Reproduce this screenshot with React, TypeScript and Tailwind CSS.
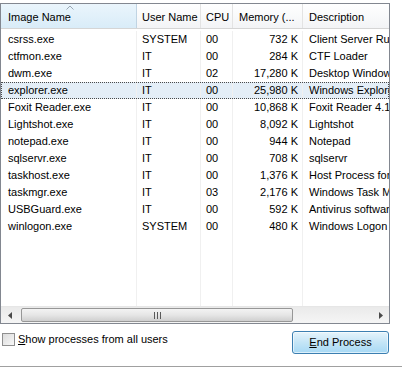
import React from 'react';

type Proc = { name: string; user: string; cpu: string; mem: string; desc: string };

const procs: Proc[] = [
    { name: 'csrss.exe', user: 'SYSTEM', cpu: '00', mem: '732 K', desc: 'Client Server Runtime Process' },
    { name: 'ctfmon.exe', user: 'IT', cpu: '00', mem: '284 K', desc: 'CTF Loader' },
    { name: 'dwm.exe', user: 'IT', cpu: '02', mem: '17,280 K', desc: 'Desktop Window Manager' },
    { name: 'explorer.exe', user: 'IT', cpu: '00', mem: '25,980 K', desc: 'Windows Explorer' },
    { name: 'Foxit Reader.exe', user: 'IT', cpu: '00', mem: '10,868 K', desc: 'Foxit Reader 4.1' },
    { name: 'Lightshot.exe', user: 'IT', cpu: '00', mem: '8,092 K', desc: 'Lightshot' },
    { name: 'notepad.exe', user: 'IT', cpu: '00', mem: '944 K', desc: 'Notepad' },
    { name: 'sqlservr.exe', user: 'IT', cpu: '00', mem: '708 K', desc: 'sqlservr' },
    { name: 'taskhost.exe', user: 'IT', cpu: '00', mem: '1,376 K', desc: 'Host Process for Windows Tasks' },
    { name: 'taskmgr.exe', user: 'IT', cpu: '03', mem: '2,176 K', desc: 'Windows Task Manager' },
    { name: 'USBGuard.exe', user: 'IT', cpu: '00', mem: '592 K', desc: 'Antivirus software' },
    { name: 'winlogon.exe', user: 'SYSTEM', cpu: '00', mem: '480 K', desc: 'Windows Logon Application' },
];

const cols = 'grid grid-cols-[136px_64px_32px_70px_87px]';

export default function App() {
    return (
        <div className="w-[402px] h-[370px] bg-white text-[11px] text-black overflow-hidden" style={{ fontFamily: '"Liberation Sans", Arial, sans-serif' }}>
            {/* List box */}
            <div className="mt-[3px] w-[390px] h-[321px] border border-[#828790] flex flex-col">
                {/* Header */}
                <div className={`${cols} h-[25px] border-b border-[#d5d5d5] bg-gradient-to-b from-white to-[#f3f4f6]`}>
                    <div className="relative flex items-center pt-[2px] pl-[7px] bg-gradient-to-b from-[#eaf5fc] to-[#d9ecf8] border-r border-[#c0d4e3]">
                        <span>Image Name</span>
                        <svg className="absolute left-[65px] top-[1px]" width="8" height="5" viewBox="0 0 8 5">
                            <path d="M0.5 4.5 L4 1 L7.5 4.5" fill="none" stroke="#9aa7b4" strokeWidth="1" />
                        </svg>
                    </div>
                    <div className="flex items-center pt-[2px] pl-[5px] border-r border-[#e3e3e3]">User Name</div>
                    <div className="flex items-center pt-[2px] pl-[5px] border-r border-[#e3e3e3]">CPU</div>
                    <div className="flex items-center pt-[2px] pl-[6px] border-r border-[#e3e3e3] whitespace-nowrap overflow-hidden">Memory (...</div>
                    <div className="flex items-center pt-[2px] pl-[6px] whitespace-nowrap overflow-hidden">Description</div>
                </div>

                {/* Rows */}
                <div className="flex-1 relative overflow-hidden pt-[2px]">
                    {procs.map((p) => {
                        const sel = p.name === 'explorer.exe';
                        return (
                            <div
                                key={p.name}
                                className={`${cols} h-[17px] items-center whitespace-nowrap ${sel ? 'bg-[#e4eef7] outline-1 outline-dotted outline-[#4a4a4a] -outline-offset-1' : ''}`}
                            >
                                <div className="pl-[7px] overflow-hidden border-r border-[#f0f0f0] h-full flex items-center">{p.name}</div>
                                <div className="pl-[5px] overflow-hidden border-r border-[#f0f0f0] h-full flex items-center">{p.user}</div>
                                <div className="pl-[5px] overflow-hidden border-r border-[#f0f0f0] h-full flex items-center">{p.cpu}</div>
                                <div className="pr-[4px] text-right overflow-hidden border-r border-[#f0f0f0] h-full flex items-center justify-end">{p.mem}</div>
                                <div className="pl-[6px] overflow-hidden h-full flex items-center">{p.desc}</div>
                            </div>
                        );
                    })}
                    {/* column guide lines below rows */}
                    <div className={`${cols} absolute left-0 right-0 bottom-0 top-[206px]`}>
                        <div className="border-r border-[#f0f0f0]" />
                        <div className="border-r border-[#f0f0f0]" />
                        <div className="border-r border-[#f0f0f0]" />
                        <div className="border-r border-[#f0f0f0]" />
                        <div />
                    </div>
                </div>

                {/* Horizontal scrollbar */}
                <div className="h-[17px] flex items-center bg-gradient-to-b from-[#eaeaea] to-[#f5f5f5] border-t border-[#e6e6e6]">
                    <div className="w-[17px] h-full flex items-center justify-center">
                        <svg width="4" height="7" viewBox="0 0 4 7"><path d="M4 0 L0 3.5 L4 7 Z" fill="#4a4a4a" /></svg>
                    </div>
                    <div className="flex-1 h-full py-[1px]">
                        <div className="w-[272px] h-full ml-[3px] rounded-[2px] border border-[#979797] bg-gradient-to-b from-[#f3f3f3] via-[#e6e6e6] to-[#cfcfcf] flex items-center justify-center">
                            <svg width="7" height="7" viewBox="0 0 7 7">
                                <path d="M0.5 0 V7 M3.5 0 V7 M6.5 0 V7" stroke="#5a5a5a" strokeWidth="1" />
                            </svg>
                        </div>
                    </div>
                    <div className="w-[17px] h-full flex items-center justify-center">
                        <svg width="4" height="7" viewBox="0 0 4 7"><path d="M0 0 L4 3.5 L0 7 Z" fill="#4a4a4a" /></svg>
                    </div>
                </div>
            </div>

            {/* Bottom controls */}
            <div className="flex items-start justify-between w-[390px] mt-[7px]">
                <label className="flex items-center gap-[3px] ml-[2px]">
                    <span className="w-[13px] h-[13px] border border-[#8f8f8f] bg-gradient-to-br from-[#dcdcdc] to-[#f8f8f8] inline-block" />
                    <span><span className="underline">S</span>how processes from all users</span>
                </label>
                <button className="w-[97px] h-[23px] rounded-[3px] border border-[#3c7fb1] bg-gradient-to-b from-[#e5f4fc] via-[#c4e5f6] to-[#a7d9f5] text-[11px] mr-[1px] shadow-[inset_0_0_0_1px_rgba(255,255,255,0.6)]">
                    <span className="underline">E</span>nd Process
                </button>
            </div>

            <div className="mt-[12px] h-[2px] border-t border-[#a0a0a0] border-b-white" />
        </div>
    );
}
